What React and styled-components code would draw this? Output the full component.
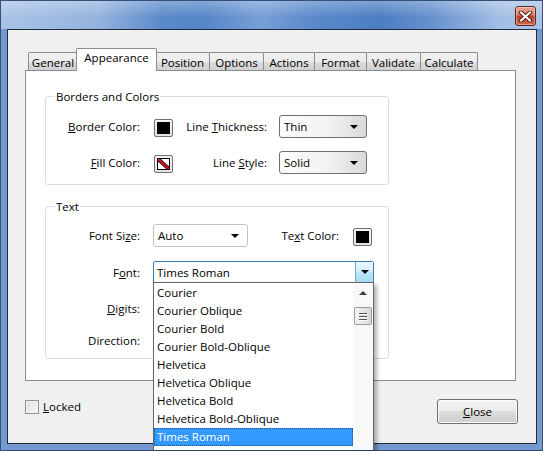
import React from "react";
import styled, { createGlobalStyle } from "styled-components";

const GlobalStyle = createGlobalStyle`
  html, body {
    margin: 0;
    padding: 0;
    overflow: hidden;
    background: #f0f0f0;
  }
  body {
    font-family: "Open Sans", "Noto Sans", Arial, sans-serif;
    font-size: 11.5px;
    color: #000;
  }
  * { box-sizing: border-box; }
`;

const Window = styled.div`
  width: 543px;
  height: 451px;
  border: 1px solid #34507a;
  padding: 0 5px 0 6px;
  display: flex;
  flex-direction: column;
  background:
    linear-gradient(180deg, rgba(255,255,255,0.28), rgba(255,255,255,0) 60%) top / 100% 28px no-repeat,
    linear-gradient(90deg, #a9c3e6 0%, #94b3de 18%, #5a89c9 30%, #5686c8 38%, #779fd6 48%, #5a89ca 58%, #4b7dc2 70%, #6892cf 80%, #a2bee4 92%, #a9c3e6 100%) top / 100% 28px no-repeat,
    #7399d0;
`;

const TitleBar = styled.div`
  height: 28px;
  display: flex;
  justify-content: flex-end;
  align-items: flex-start;
`;

const CloseX = styled.div`
  width: 21px;
  height: 20px;
  margin: 5px 1px 0 0;
  border: 1px solid #5b2a22;
  border-radius: 3px;
  background: linear-gradient(#e9a899, #d7775f 45%, #c0402a 52%, #d06a50);
  box-shadow: inset 0 0 0 1px rgba(255,255,255,0.35);
  display: flex;
  align-items: center;
  justify-content: center;
`;

const Client = styled.div`
  height: 415px;
  border: 1px solid #1e2b3d;
  background: #f0f0f0;
  display: flex;
  flex-direction: column;
`;

const TabRow = styled.div`
  display: flex;
  align-items: flex-end;
  height: 23px;
  margin: 18px 0 -1px 20px;
`;

const Tab = styled.div`
  width: ${p => p.$w}px;
  height: ${p => (p.$active ? 23 : 19)}px;
  margin-left: ${p => (p.$active ? -2 : p.$first ? 0 : -1)}px;
  margin-right: ${p => (p.$active ? -1 : 0)}px;
  border: 1px solid #898c95;
  border-bottom: none;
  border-radius: 2px 2px 0 0;
  background: ${p => (p.$active ? "#fff" : "linear-gradient(#f2f2f2, #ebebeb 50%, #dddddd 50%, #cfcfcf)")};
  position: ${p => (p.$active ? "relative" : "static")};
  z-index: ${p => (p.$active ? 1 : "auto")};
  display: flex;
  justify-content: center;
  align-items: ${p => (p.$active ? "flex-start" : "center")};
  padding-top: ${p => (p.$active ? 1 : 0)}px;
  white-space: nowrap;
`;

const Panel = styled.div`
  width: 491px;
  height: 311px;
  margin-left: 17px;
  border: 1px solid #898c95;
  background: #fff;
  padding: 25px 0 0 19px;
`;

const Group = styled.div`
  width: 344px;
  height: ${p => p.$h}px;
  margin-top: ${p => p.$mt || 0}px;
  border: 1px solid #d5dfe5;
  border-radius: 3px;
`;

const Legend = styled.div`
  width: fit-content;
  height: 16px;
  line-height: 16px;
  margin: -8px 0 0 9px;
  padding: 0 1px;
  background: #fff;
`;

const Row = styled.div`
  display: flex;
  align-items: center;
  height: ${p => p.$h || 23}px;
  margin-top: ${p => p.$mt}px;
`;

const Label = styled.div`
  width: ${p => p.$w}px;
  padding-right: ${p => p.$pr}px;
  text-align: right;
  white-space: nowrap;
`;

const Swatch = styled.div`
  width: 19px;
  height: 18px;
  margin-top: 2px;
  padding: 2px;
  border: 1px solid #707070;
  border-radius: 2px;
  background: linear-gradient(#f6f6f6, #e3e3e3);
  display: flex;
`;

const SwatchFill = styled.div`
  flex: 1;
  background: ${p => p.$color};
  border: 1px solid #000;
`;

const Select = styled.div`
  width: ${p => p.$w}px;
  height: ${p => p.$h || 23}px;
  border: 1px solid ${p => (p.$flat ? "#c3c3c3" : "#707070")};
  border-radius: 3px;
  background: ${p => (p.$flat ? "#fff" : "linear-gradient(90deg, #fdfdfd, #f3f3f3 55%, #d9d9d9)")};
  display: flex;
  align-items: center;
  justify-content: space-between;
  padding: 0 8px 0 4px;
`;

const Arrow = styled.span`
  width: 0;
  height: 0;
  border-left: 4px solid transparent;
  border-right: 4px solid transparent;
  border-top: 4px solid #000;
`;

const Combo = styled.div`
  position: relative;
  width: 221px;
  height: 22px;
  border: 1px solid #3c7fb1;
  border-radius: 2px;
  background: #fff;
  display: flex;
  align-items: stretch;
`;

const ComboText = styled.div`
  flex: 1;
  display: flex;
  align-items: center;
  padding-left: 3px;
`;

const ComboButton = styled.div`
  width: 18px;
  border-left: 1px solid #6da7d3;
  background: linear-gradient(#eaf6fd, #d9f0fc 45%, #bee6fd 50%, #a7d9f5);
  display: flex;
  align-items: center;
  justify-content: center;
`;

const List = styled.div`
  position: absolute;
  top: 100%;
  left: -1px;
  width: 221px;
  height: 168px;
  border: 1px solid #646464;
  border-bottom: none;
  background: #fff;
  box-shadow: 3px 3px 4px rgba(0, 0, 0, 0.3);
  display: flex;
  padding-top: 1px;
  z-index: 5;
`;

const Items = styled.div`
  flex: 1;
`;

const Item = styled.div`
  height: 18px;
  line-height: 18px;
  padding-left: 3px;
  white-space: nowrap;
  background: ${p => (p.$sel ? "#3399ff" : "transparent")};
  color: ${p => (p.$sel ? "#fff" : "#000")};
  outline: ${p => (p.$sel ? "1px dotted rgba(0,0,0,0.45)" : "none")};
  outline-offset: -1px;
`;

const ScrollBar = styled.div`
  width: 20px;
  background: #f8f8f8;
  display: flex;
  flex-direction: column;
  align-items: center;
`;

const ScrollUp = styled.div`
  height: 17px;
  display: flex;
  align-items: center;
  justify-content: center;
  &::before {
    content: "";
    border-left: 4px solid transparent;
    border-right: 4px solid transparent;
    border-bottom: 4px solid #3d3d3d;
  }
`;

const Thumb = styled.div`
  width: 18px;
  height: 18px;
  margin-top: 6px;
  border: 1px solid #9a9a9a;
  border-radius: 2px;
  background: linear-gradient(90deg, #f3f3f3, #e6e6e6 50%, #d8d8d8);
  display: flex;
  flex-direction: column;
  align-items: center;
  justify-content: center;
  gap: 2px;
  span {
    width: 8px;
    height: 1px;
    background: #555;
    box-shadow: 0 1px 0 #fff;
  }
`;

const Footer = styled.div`
  display: flex;
  justify-content: space-between;
  align-items: flex-start;
  padding: 0 18px 0 17px;
`;

const CheckRow = styled.label`
  display: flex;
  align-items: center;
  gap: 4px;
  margin-top: 18px;
`;

const CheckBox = styled.span`
  width: 14px;
  height: 14px;
  border: 1px solid #8e8f8f;
  background: linear-gradient(135deg, #dcdcdc, #f8f8f8);
  box-shadow: inset 0 0 0 1px #f4f4f4;
`;

const Button = styled.div`
  width: 81px;
  height: 25px;
  margin-top: 18px;
  border: 1px solid #707070;
  border-radius: 3px;
  background: linear-gradient(#f2f2f2, #ebebeb 50%, #dddddd 50%, #cfcfcf);
  box-shadow: inset 0 0 0 1px #fcfcfc;
  display: flex;
  align-items: center;
  justify-content: center;
`;

const tabs = [
  ["General", 50],
  ["Appearance", 81],
  ["Position", 55],
  ["Options", 55],
  ["Actions", 52],
  ["Format", 53],
  ["Validate", 55],
  ["Calculate", 58],
];

const fonts = [
  "Courier",
  "Courier Oblique",
  "Courier Bold",
  "Courier Bold-Oblique",
  "Helvetica",
  "Helvetica Oblique",
  "Helvetica Bold",
  "Helvetica Bold-Oblique",
  "Times Roman",
];

function NoFill() {
  return (
    <svg width="13" height="12" viewBox="0 0 13 12">
      <rect x="0.5" y="0.5" width="12" height="11" fill="#fff" stroke="#000" />
      <line x1="1.5" y1="1.5" x2="11.5" y2="10.5" stroke="#3a0a0a" strokeWidth="3.8" />
      <line x1="1.5" y1="1.5" x2="11.5" y2="10.5" stroke="#d0141e" strokeWidth="2.2" />
    </svg>
  );
}

export default function App() {
  return (
    <>
      <GlobalStyle />
      <Window>
        <TitleBar>
          <CloseX>
            <svg width="13" height="11" viewBox="0 0 13 11">
              <path d="M2 1.5 L11 9.5 M11 1.5 L2 9.5" stroke="#4a1a12" strokeWidth="4" strokeLinecap="round" />
              <path d="M2 1.5 L11 9.5 M11 1.5 L2 9.5" stroke="#fff" strokeWidth="2.2" strokeLinecap="round" />
            </svg>
          </CloseX>
        </TitleBar>
        <Client>
          <TabRow>
            {tabs.map(([name, w], i) => (
              <Tab key={name} $w={w} $active={name === "Appearance"} $first={i === 0}>
                {name}
              </Tab>
            ))}
          </TabRow>
          <Panel>
            <Group $h={89}>
              <Legend>Borders and Colors</Legend>
              <Row $mt={10}>
                <Label $w={108} $pr={14}><u>B</u>order Color:</Label>
                <Swatch><SwatchFill $color="#000" /></Swatch>
                <Label $w={106} $pr={12}>Line <u>T</u>hickness:</Label>
                <Select $w={88}><span>Thin</span><Arrow /></Select>
              </Row>
              <Row $mt={13}>
                <Label $w={108} $pr={14}><u>F</u>ill Color:</Label>
                <Swatch><NoFill /></Swatch>
                <Label $w={106} $pr={12}>Line <u>S</u>tyle:</Label>
                <Select $w={88}><span>Solid</span><Arrow /></Select>
              </Row>
            </Group>
            <Group $h={153} $mt={21}>
              <Legend>Text</Legend>
              <Row $mt={9}>
                <Label $w={107} $pr={13}>Font Si<u>z</u>e:</Label>
                <Select $w={95} $flat><span>Auto</span><Arrow /></Select>
                <Label $w={105} $pr={14}>Te<u>x</u>t Color:</Label>
                <Swatch><SwatchFill $color="#000" /></Swatch>
              </Row>
              <Row $mt={14} $h={22}>
                <Label $w={107} $pr={13}>F<u>o</u>nt:</Label>
                <Combo>
                  <ComboText>Times Roman</ComboText>
                  <ComboButton><Arrow /></ComboButton>
                  <List>
                    <Items>
                      {fonts.map(f => (
                        <Item key={f} $sel={f === "Times Roman"}>{f}</Item>
                      ))}
                    </Items>
                    <ScrollBar>
                      <ScrollUp />
                      <Thumb><span /><span /><span /></Thumb>
                    </ScrollBar>
                  </List>
                </Combo>
              </Row>
              <Row $mt={14} $h={22}>
                <Label $w={107} $pr={13}><u>D</u>igits:</Label>
              </Row>
              <Row $mt={10} $h={22}>
                <Label $w={107} $pr={13}>Direction:</Label>
              </Row>
            </Group>
          </Panel>
          <Footer>
            <CheckRow>
              <CheckBox />
              <span><u>L</u>ocked</span>
            </CheckRow>
            <Button><span><u>C</u>lose</span></Button>
          </Footer>
        </Client>
      </Window>
    </>
  );
}
